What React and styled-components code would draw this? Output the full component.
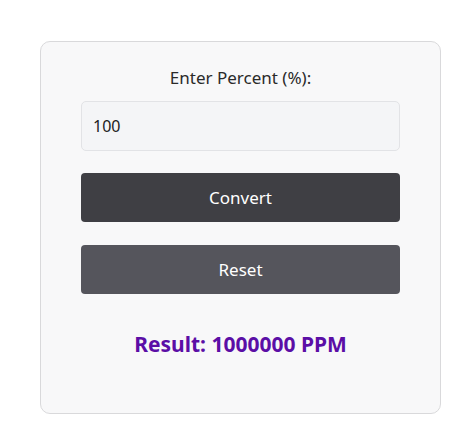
import styled, { createGlobalStyle } from "styled-components";
import { useState } from "react";

const GlobalStyle = createGlobalStyle`
  html, body {
    margin: 0;
    padding: 0;
    background: #ffffff;
    font-family: "Noto Sans", "Open Sans", sans-serif;
  }
`;

function App() {
  const [value, setValue] = useState("100");
  const [result, setResult] = useState("1000000");

  function convert() {
    const n = parseFloat(value);
    setResult(isNaN(n) ? "" : String(n * 10000));
  }

  function reset() {
    setValue("");
    setResult("");
  }

  return (
    <Page>
      <GlobalStyle />
      <Card>
        <Label htmlFor="pct">Enter Percent (%):</Label>
        <Input
          id="pct"
          value={value}
          onChange={(e) => setValue(e.target.value)}
        />
        <Button onClick={convert}>Convert</Button>
        <Button $secondary onClick={reset}>
          Reset
        </Button>
        <Result>Result: {result} PPM</Result>
      </Card>
    </Page>
  );
}

const Page = styled.div`
  padding: 41px 0 0 40px;
`;

const Card = styled.div`
  box-sizing: border-box;
  width: 401px;
  height: 373px;
  padding: 24px 40px 0;
  background: #f8f8f9;
  border: 1px solid #d9d9db;
  border-radius: 10px;
  display: flex;
  flex-direction: column;
`;

const Label = styled.label`
  text-align: center;
  font-size: 17px;
  line-height: 24px;
  color: #2a2a2a;
  margin-bottom: 11px;
`;

const Input = styled.input`
  box-sizing: border-box;
  height: 50px;
  padding: 0 11px;
  font-family: "Noto Sans", "Open Sans", sans-serif;
  font-size: 16px;
  color: #222;
  background: #f4f5f7;
  border: 1px solid #e2e3e6;
  border-radius: 5px;
  outline: none;
  margin-bottom: 22px;
`;

const Button = styled.button`
  height: 49px;
  margin-bottom: 23px;
  border: none;
  border-radius: 4px;
  background: ${(p) => (p.$secondary ? "#55555c" : "#3f3f44")};
  color: #ffffff;
  font-family: "Noto Sans", "Open Sans", sans-serif;
  font-size: 17px;
  cursor: pointer;
`;

const Result = styled.div`
  margin-top: 13px;
  text-align: center;
  font-size: 21px;
  font-weight: 700;
  color: #5b0ea6;
`;

export default App;
